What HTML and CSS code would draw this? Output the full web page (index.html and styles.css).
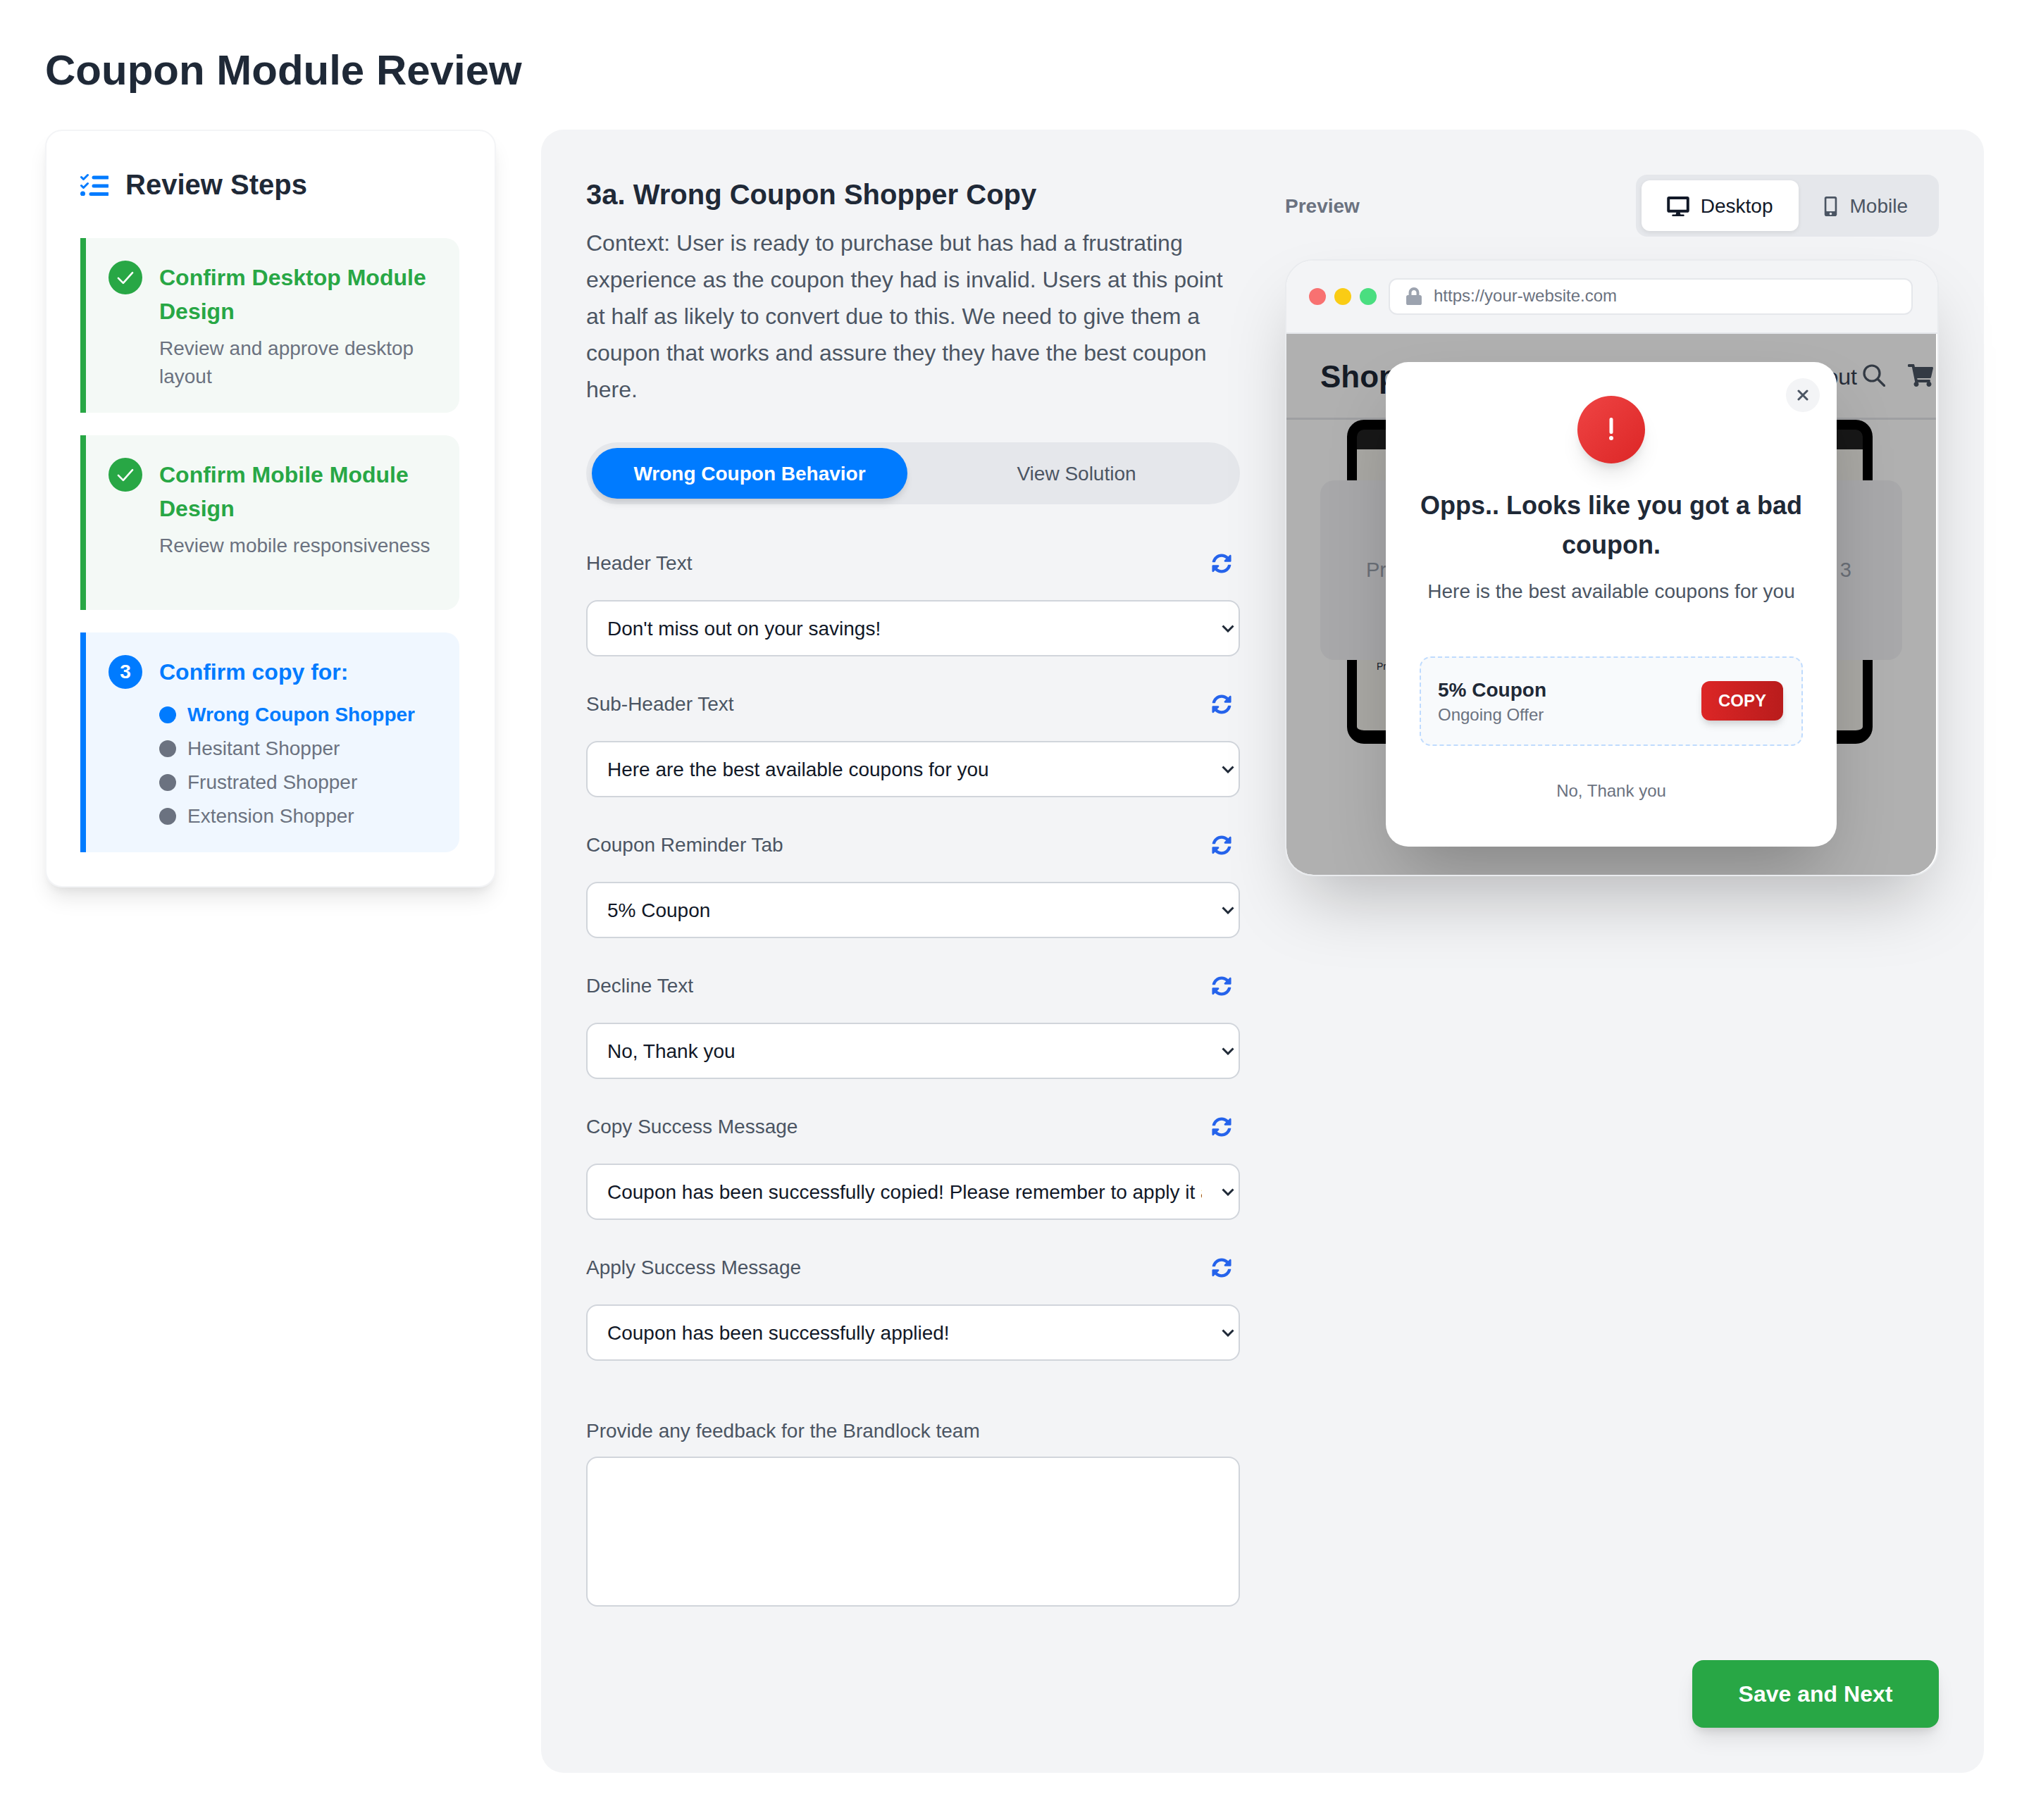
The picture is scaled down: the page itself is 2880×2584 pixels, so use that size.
FILE: index.html
```html
<!DOCTYPE html>
<html lang="en">
<head>
    <meta charset="UTF-8">
    <title>Coupon Module Review</title>
    <link rel="stylesheet" href="styles.css">
</head>
<body>
    <h1 class="page-title">Coupon Module Review</h1>

    <div class="layout">
        <aside class="sidebar">
            <h2 class="sidebar-title">
                <svg class="tasks-icon" viewBox="0 0 40 32" fill="none" stroke="#007bff" stroke-linecap="round" stroke-linejoin="round">
                    <path d="M1.5 5.5l3 3 6-6" stroke-width="3"/>
                    <path d="M1.5 17.500l3 3 6-6" stroke-width="3"/>
                    <circle cx="3.500" cy="29" r="3.500" fill="#007bff" stroke="none"/>
                    <path d="M19 6h20M19 18h20M15 29.500h24" stroke-width="5"/>
                </svg>
                Review Steps
            </h2>

            <div class="step done">
                <span class="step-badge">
                    <svg viewBox="0 0 24 24" fill="none" stroke="#fff" stroke-width="1.400" stroke-linecap="round" stroke-linejoin="round"><path d="M6.500 12.500l3.800 3.800 7.200-8"/></svg>
                </span>
                <div class="step-body">
                    <h3>Confirm Desktop Module Design</h3>
                    <p>Review and approve desktop layout</p>
                </div>
            </div>

            <div class="step done">
                <span class="step-badge">
                    <svg viewBox="0 0 24 24" fill="none" stroke="#fff" stroke-width="1.400" stroke-linecap="round" stroke-linejoin="round"><path d="M6.500 12.500l3.800 3.800 7.200-8"/></svg>
                </span>
                <div class="step-body">
                    <h3>Confirm Mobile Module Design</h3>
                    <p>Review mobile responsiveness</p>
                </div>
            </div>

            <div class="step current">
                <span class="step-badge">3</span>
                <div class="step-body">
                    <h3>Confirm copy for:</h3>
                    <ul class="substeps">
                        <li class="active">Wrong Coupon Shopper</li>
                        <li>Hesitant Shopper</li>
                        <li>Frustrated Shopper</li>
                        <li>Extension Shopper</li>
                    </ul>
                </div>
            </div>
        </aside>

        <main class="panel">
            <div class="columns">
                <section class="form-col">
                    <h2 class="panel-title">3a. Wrong Coupon Shopper Copy</h2>
                    <p class="context">Context: User is ready to purchase but has had a frustrating experience as the coupon they had is invalid. Users at this point at half as likely to convert due to this. We need to give them a coupon that works and assure they they have the best coupon here.</p>

                    <div class="tabs">
                        <button class="tab active">Wrong Coupon Behavior</button>
                        <button class="tab">View Solution</button>
                    </div>

                    <div class="fields">
                        <div class="field">
                            <div class="field-head">
                                <label>Header Text</label>
                                <svg class="refresh" viewBox="0 0 512 512"><use href="#sync"/></svg>
                            </div>
                            <select><option>Don't miss out on your savings!</option></select>
                        </div>
                        <div class="field">
                            <div class="field-head">
                                <label>Sub-Header Text</label>
                                <svg class="refresh" viewBox="0 0 512 512"><use href="#sync"/></svg>
                            </div>
                            <select><option>Here are the best available coupons for you</option></select>
                        </div>
                        <div class="field">
                            <div class="field-head">
                                <label>Coupon Reminder Tab</label>
                                <svg class="refresh" viewBox="0 0 512 512"><use href="#sync"/></svg>
                            </div>
                            <select><option>5% Coupon</option></select>
                        </div>
                        <div class="field">
                            <div class="field-head">
                                <label>Decline Text</label>
                                <svg class="refresh" viewBox="0 0 512 512"><use href="#sync"/></svg>
                            </div>
                            <select><option>No, Thank you</option></select>
                        </div>
                        <div class="field">
                            <div class="field-head">
                                <label>Copy Success Message</label>
                                <svg class="refresh" viewBox="0 0 512 512"><use href="#sync"/></svg>
                            </div>
                            <select><option>Coupon has been successfully copied! Please remember to apply it at checkout.</option></select>
                        </div>
                        <div class="field">
                            <div class="field-head">
                                <label>Apply Success Message</label>
                                <svg class="refresh" viewBox="0 0 512 512"><use href="#sync"/></svg>
                            </div>
                            <select><option>Coupon has been successfully applied!</option></select>
                        </div>
                    </div>

                    <div class="feedback">
                        <label>Provide any feedback for the Brandlock team</label>
                        <textarea></textarea>
                    </div>
                </section>

                <section class="preview-col">
                    <div class="preview-head">
                        <span class="preview-label">Preview</span>
                        <div class="device-toggle">
                            <button class="device active">
                                <svg class="desktop-icon" viewBox="0 0 576 512"><path d="M528 0H48C21.500 0 0 21.500 0 48v320c0 26.500 21.500 48 48 48h192l-16 48h-72c-13.300 0-24 10.700-24 24s10.700 24 24 24h272c13.300 0 24-10.700 24-24s-10.700-24-24-24h-72l-16-48h192c26.500 0 48-21.500 48-48V48c0-26.500-21.500-48-48-48zM504 344H72V72h432v272z"/></svg>
                                Desktop
                            </button>
                            <button class="device">
                                <svg class="mobile-icon" viewBox="0 0 320 512"><path d="M272 0H48C21.500 0 0 21.500 0 48v416c0 26.500 21.500 48 48 48h224c26.500 0 48-21.500 48-48V48c0-26.500-21.500-48-48-48zM160 480c-17.700 0-32-14.300-32-32s14.300-32 32-32 32 14.300 32 32-14.300 32-32 32zm112-108c0 6.600-5.400 12-12 12H60c-6.600 0-12-5.400-12-12V60c0-6.600 5.400-12 12-12h200c6.600 0 12 5.400 12 12v312z"/></svg>
                                Mobile
                            </button>
                        </div>
                    </div>

                    <div class="browser">
                        <div class="browser-bar">
                            <span class="light red"></span>
                            <span class="light yellow"></span>
                            <span class="light green"></span>
                            <div class="url-bar">
                                <svg class="lock-icon" viewBox="0 0 448 512"><path d="M400 224h-24v-72C376 68.200 307.800 0 224 0S72 68.200 72 152v72H48c-26.500 0-48 21.500-48 48v192c0 26.500 21.500 48 48 48h352c26.500 0 48-21.500 48-48V272c0-26.500-21.500-48-48-48zm-104 0H152v-72c0-39.700 32.300-72 72-72s72 32.300 72 72v72z"/></svg>
                                https://your-website.com
                            </div>
                        </div>

                        <div class="site">
                            <div class="site-nav">
                                <span class="site-logo">Shop</span>
                                <div class="site-links">
                                    <span class="site-link">About</span>
                                    <svg class="search-icon" viewBox="0 0 32 32" fill="none" stroke="#4b5563" stroke-width="3.200" stroke-linecap="round"><circle cx="13" cy="13" r="11"/><path d="M21 21l9.500 9.500"/></svg>
                                    <svg class="cart-icon" viewBox="0 0 576 512" fill="#4b5563"><path d="M528.120 301.319l47.273-208C578.806 78.301 567.391 64 551.990 64H159.208l-9.166-44.810C147.758 8.021 137.930 0 126.529 0H24C10.745 0 0 10.745 0 24v16c0 13.255 10.745 24 24 24h69.883l70.248 343.435C147.325 417.100 136 435.222 136 456c0 30.928 25.072 56 56 56s56-25.072 56-56c0-15.674-6.447-29.835-16.824-40h209.647C430.447 426.165 424 440.326 424 456c0 30.928 25.072 56 56 56s56-25.072 56-56c0-22.172-12.888-41.332-31.579-50.405l5.517-24.276c3.413-15.018-8.002-29.319-23.403-29.319H218.117l-6.545-32h293.145c11.206 0 20.920-7.754 23.403-18.681z"/></svg>
                                </div>
                            </div>

                            <div class="phone">
                                <div class="phone-top"></div>
                                <div class="phone-screen"><span>Pr</span></div>
                            </div>

                            <div class="site-card">
                                <span>Product 1</span>
                                <span>Product 3</span>
                            </div>

                            <div class="overlay">
                                <div class="modal">
                                    <button class="modal-close">
                                        <svg viewBox="0 0 16 16" fill="none" stroke="#4b5563" stroke-width="3" stroke-linecap="round"><path d="M2 2l12 12M14 2L2 14"/></svg>
                                    </button>
                                    <div class="alert-icon">
                                        <svg viewBox="0 0 6 32" fill="#fff"><rect x="0.500" y="0" width="5" height="23" rx="2.500"/><circle cx="3" cy="29" r="3"/></svg>
                                    </div>
                                    <h3 class="modal-title">Opps.. Looks like you got a bad coupon.</h3>
                                    <p class="modal-sub">Here is the best available coupons for you</p>
                                    <div class="coupon">
                                        <div>
                                            <div class="coupon-name">5% Coupon</div>
                                            <div class="coupon-note">Ongoing Offer</div>
                                        </div>
                                        <button class="coupon-copy">COPY</button>
                                    </div>
                                    <div class="modal-decline">No, Thank you</div>
                                </div>
                            </div>
                        </div>
                    </div>
                </section>
            </div>

            <div class="actions">
                <button class="save-btn">Save and Next</button>
            </div>
        </main>
    </div>

    <svg class="sprite" xmlns="http://www.w3.org/2000/svg">
        <symbol id="sync" viewBox="0 0 512 512">
            <path d="M370.720 133.280C339.458 104.008 298.888 87.962 255.848 88c-77.458.068-144.328 53.178-162.791 126.850-1.344 5.363-6.122 9.150-11.651 9.150H24.103c-7.498 0-13.194-6.807-11.807-14.176C33.933 94.924 134.813 8 256 8c66.448 0 126.791 26.136 171.315 68.685L463.030 40.970C478.149 25.851 504 36.559 504 57.941V192c0 13.255-10.745 24-24 24H345.941c-21.382 0-32.090-25.851-16.971-40.971l41.750-41.749zM32 296h134.059c21.382 0 32.090 25.851 16.971 40.971l-41.750 41.750c31.262 29.273 71.835 45.319 114.876 45.280 77.418-.07 144.315-53.144 162.787-126.849 1.344-5.363 6.122-9.150 11.651-9.150h57.304c7.498 0 13.194 6.807 11.807 14.176C478.067 417.076 377.187 504 256 504c-66.448 0-126.791-26.136-171.315-68.685L48.970 471.030C33.851 486.149 8 475.441 8 454.059V320c0-13.255 10.745-24 24-24z"/>
        </symbol>
    </svg>
</body>
</html>
```

FILE: styles.css
```css
* {
    box-sizing: border-box;
}

body {
    margin: 0;
    padding: 64px;
    background-color: #ffffff;
    color: #1f2937;
    font-family: "Liberation Sans", Arial, sans-serif;
}

button {
    font-family: inherit;
    border: none;
    cursor: pointer;
}

.sprite {
    display: none;
}

.page-title {
    margin: 0 0 48px;
    font-size: 60px;
    line-height: 72px;
    font-weight: 700;
    color: #1f2937;
}

.layout {
    display: flex;
    align-items: flex-start;
    gap: 64px;
}

/* sidebar */

.sidebar {
    flex: 0 0 640px;
    padding: 48px 50px 48px 48px;
    background-color: #ffffff;
    border: 2px solid #f3f4f6;
    border-radius: 24px;
    box-shadow: 0 20px 30px -6px rgba(0, 0, 0, 0.1), 0 8px 12px -4px rgba(0, 0, 0, 0.05);
}

.sidebar-title {
    display: flex;
    align-items: center;
    gap: 24px;
    margin: 0 0 48px;
    height: 56px;
    font-size: 40px;
    font-weight: 700;
}

.tasks-icon {
    width: 40px;
    height: 32px;
}

.step {
    display: flex;
    gap: 24px;
    margin-bottom: 32px;
    padding: 32px;
    border-left: 8px solid #28a745;
    border-radius: 0 20px 20px 0;
    background-color: #f4f9f6;
}

.step.done {
    height: 248px;
}

.step:last-child {
    margin-bottom: 0;
}

.step.current {
    padding-bottom: 31px;
    border-left-color: #007bff;
    background-color: #f0f7ff;
}

.step-badge {
    flex: 0 0 48px;
    display: flex;
    align-items: center;
    justify-content: center;
    width: 48px;
    height: 48px;
    border-radius: 50%;
    background-color: #28a745;
    color: #ffffff;
    font-size: 28px;
    font-weight: 700;
}

.step-badge svg {
    width: 44px;
    height: 44px;
}

.current .step-badge {
    background-color: #007bff;
}

.step-body h3 {
    margin: 0;
    font-size: 32px;
    line-height: 48px;
    font-weight: 700;
    color: #28a745;
}

.current .step-body h3 {
    color: #007bff;
}

.step-body p {
    margin: 9px 0 0;
    font-size: 28px;
    line-height: 40px;
    color: #6b7280;
}

.substeps {
    list-style: none;
    margin: 17px 0 0;
    padding: 0;
}

.substeps li {
    display: flex;
    align-items: center;
    gap: 16px;
    height: 40px;
    margin-bottom: 8px;
    font-size: 28px;
    color: #6b7280;
}

.substeps li:last-child {
    margin-bottom: 0;
}

.substeps li::before {
    content: "";
    flex: 0 0 24px;
    height: 24px;
    border-radius: 50%;
    background-color: #6b7280;
}

.substeps li.active {
    font-weight: 700;
    color: #007bff;
}

.substeps li.active::before {
    background-color: #007bff;
}

/* main panel */

.panel {
    flex: 1;
    padding: 64px;
    background-color: #f3f4f6;
    border-radius: 32px;
}

.columns {
    display: grid;
    grid-template-columns: 1fr 1fr;
    gap: 64px;
    align-items: start;
}

.panel-title {
    margin: 0 0 15px;
    font-size: 40px;
    line-height: 56px;
    font-weight: 700;
}

.context {
    margin: 0 0 49px;
    font-size: 32px;
    line-height: 52px;
    color: #4b5563;
}

.tabs {
    display: flex;
    height: 88px;
    padding: 8px;
    background-color: #e5e7eb;
    border-radius: 44px;
}

.tab {
    flex: 1;
    margin-left: 16px;
    padding-top: 2px;
    background: none;
    border-radius: 36px;
    font-size: 28px;
    color: #4b5563;
}

.tab.active {
    flex: 0 0 448px;
    margin-left: 0;
    background-color: #007bff;
    color: #ffffff;
    font-weight: 700;
    box-shadow: 0 8px 12px -2px rgba(0, 0, 0, 0.1), 0 4px 8px -2px rgba(0, 0, 0, 0.06);
}

.fields {
    margin-top: 64px;
}

.field {
    margin-bottom: 48px;
}

.field:last-child {
    margin-bottom: 0;
}

.field-head {
    display: flex;
    justify-content: space-between;
    align-items: center;
    height: 40px;
    margin-bottom: 32px;
    padding-right: 12px;
}

label {
    font-size: 28px;
    line-height: 40px;
    color: #4b5563;
}

.refresh {
    width: 28px;
    height: 28px;
    fill: #2563eb;
}

select {
    display: block;
    width: 100%;
    height: 80px;
    padding: 0 52px 0 28px;
    appearance: none;
    background: #ffffff url("data:image/svg+xml,%3Csvg xmlns='http://www.w3.org/2000/svg' viewBox='0 0 18 11'%3E%3Cpath d='M1.5 1.500L9 9l7.500-7.500' fill='none' stroke='%231f2937' stroke-width='3'/%3E%3C/svg%3E") no-repeat right 6px center / 18px 11px;
    border: 2px solid #d1d5db;
    border-radius: 16px;
    font-family: inherit;
    font-size: 28px;
    color: #111827;
}

.feedback {
    margin-top: 80px;
}

.feedback label {
    display: block;
    margin-bottom: 16px;
}

textarea {
    display: block;
    width: 100%;
    height: 213px;
    background-color: #ffffff;
    border: 2px solid #d1d5db;
    border-radius: 16px;
    resize: none;
}

.actions {
    display: flex;
    justify-content: flex-end;
    margin-top: 76px;
}

.save-btn {
    width: 350px;
    height: 96px;
    background-color: #28a745;
    border-radius: 16px;
    color: #ffffff;
    font-size: 32px;
    font-weight: 700;
    box-shadow: 0 20px 30px -6px rgba(0, 0, 0, 0.1), 0 8px 12px -4px rgba(0, 0, 0, 0.1);
}

/* preview */

.preview-head {
    display: flex;
    justify-content: space-between;
    align-items: center;
    margin-bottom: 32px;
}

.preview-label {
    padding-top: 2px;
    font-size: 28px;
    font-weight: 700;
    color: #6b7280;
}

.device-toggle {
    display: flex;
    height: 88px;
    padding: 8px;
    background-color: #e5e7eb;
    border-radius: 16px;
}

.device {
    display: flex;
    align-items: center;
    gap: 18px;
    padding: 2px 36px 0;
    background: none;
    border-radius: 12px;
    font-size: 28px;
    color: #4b5563;
}

.device.active {
    gap: 16px;
    background-color: #ffffff;
    color: #111827;
    box-shadow: 0 2px 6px rgba(0, 0, 0, 0.08);
}

.desktop-icon {
    width: 32px;
    height: 28px;
    fill: #111827;
}

.mobile-icon {
    width: 19px;
    height: 28px;
    fill: #4b5563;
}

.browser {
    overflow: hidden;
    background-color: #ffffff;
    border: 2px solid #e9ebee;
    border-radius: 40px;
    box-shadow: 0 50px 100px -24px rgba(0, 0, 0, 0.25);
}

.browser-bar {
    display: flex;
    align-items: center;
    gap: 12px;
    height: 104px;
    padding: 0 32px;
    background-color: #f3f4f6;
    border-bottom: 2px solid #e5e7eb;
}

.light {
    flex: 0 0 24px;
    height: 24px;
    border-radius: 50%;
}

.red {
    background-color: #f87171;
}

.yellow {
    background-color: #facc15;
}

.green {
    background-color: #4ade80;
}

.url-bar {
    flex: 1;
    display: flex;
    align-items: center;
    gap: 17px;
    height: 52px;
    margin: 0 3px 0 5px;
    padding: 0 23px 2px;
    background-color: #ffffff;
    border: 2px solid #e5e7eb;
    border-radius: 12px;
    font-size: 24px;
    color: #6b7280;
}

.lock-icon {
    width: 22px;
    height: 25px;
    fill: #9ca3af;
}

.site {
    position: relative;
    height: 768px;
    margin-right: 2px;
    background-color: #ffffff;
    border-radius: 0 0 38px 38px;
    overflow: hidden;
}

.site-nav {
    display: flex;
    justify-content: space-between;
    align-items: center;
    height: 122px;
    padding: 3px 4px 0 48px;
    border-bottom: 3px solid #e5e7eb;
}

.site-logo {
    font-size: 44px;
    font-weight: 700;
}

.site-links {
    display: flex;
    align-items: center;
}

.site-link {
    font-size: 32px;
    color: #374151;
}

.search-icon {
    width: 32px;
    height: 32px;
    margin: -4px 32px 0 8px;
}

.cart-icon {
    width: 36px;
    height: 32px;
    margin-top: -4px;
}

.phone {
    width: 746px;
    height: 460px;
    margin: 0 0 0 86px;
    overflow: hidden;
    background-color: #000000;
    border: solid #000000;
    border-width: 14px 14px 19px;
    border-radius: 24px;
}

.phone-top {
    height: 28px;
    background-color: #222222;
}

.phone-screen {
    height: 400px;
    padding: 300px 0 0 28px;
    background-color: #f5f3ee;
    font-size: 14px;
    color: #1f2937;
}

/* floats over the phone picture */
.site-card {
    position: absolute;
    left: 48px;
    top: 208px;
    display: flex;
    justify-content: space-between;
    align-items: center;
    width: 826px;
    height: 255px;
    padding: 0 72px 0 65px;
    background-color: #f3f4f6;
    border-radius: 20px;
    font-size: 29px;
    color: #9ca3af;
}

.overlay {
    position: absolute;
    inset: 0;
    display: flex;
    align-items: center;
    justify-content: center;
    background-color: rgba(0, 0, 0, 0.31);
}

.modal {
    position: relative;
    width: 640px;
    padding: 48px 48px 63px;
    background-color: #ffffff;
    border-radius: 32px;
    text-align: center;
    box-shadow: 0 50px 100px -24px rgba(0, 0, 0, 0.25);
}

.modal-close {
    position: absolute;
    top: 23px;
    right: 24px;
    display: flex;
    align-items: center;
    justify-content: center;
    width: 48px;
    height: 48px;
    padding: 0;
    background-color: #f3f4f6;
    border-radius: 50%;
}

.modal-close svg {
    width: 16px;
    height: 16px;
}

.alert-icon {
    display: flex;
    align-items: center;
    justify-content: center;
    width: 96px;
    height: 96px;
    margin: 0 auto 32px;
    background: linear-gradient(135deg, #ef4444, #dc2626);
    border-radius: 50%;
    box-shadow: 0 20px 30px -6px rgba(0, 0, 0, 0.1), 0 8px 12px -4px rgba(0, 0, 0, 0.1);
}

.alert-icon svg {
    width: 6px;
    height: 32px;
    margin-top: -3px;
}

.modal-title {
    margin: 0 0 18px;
    font-size: 36px;
    line-height: 56px;
    font-weight: 700;
}

.modal-sub {
    margin: 0 0 72px;
    font-size: 28px;
    line-height: 40px;
    color: #4b5563;
}

.coupon {
    display: flex;
    justify-content: space-between;
    align-items: center;
    height: 127px;
    padding: 0 26px 0 24px;
    background-color: #f8fafc;
    border: 2px dashed #bfdbfe;
    border-radius: 16px;
    text-align: left;
}

.coupon-name {
    font-size: 28px;
    line-height: 38px;
    font-weight: 700;
}

.coupon-note {
    font-size: 24px;
    line-height: 32px;
    color: #6b7280;
}

.coupon-copy {
    width: 116px;
    height: 56px;
    margin-top: -2px;
    background: linear-gradient(90deg, #dc2626, #b91c1c);
    border-radius: 12px;
    color: #ffffff;
    font-size: 24px;
    font-weight: 700;
    box-shadow: 0 8px 12px -2px rgba(0, 0, 0, 0.12), 0 4px 8px -2px rgba(0, 0, 0, 0.08);
}

.modal-decline {
    margin-top: 48px;
    font-size: 24px;
    line-height: 32px;
    color: #6b7280;
}
```
